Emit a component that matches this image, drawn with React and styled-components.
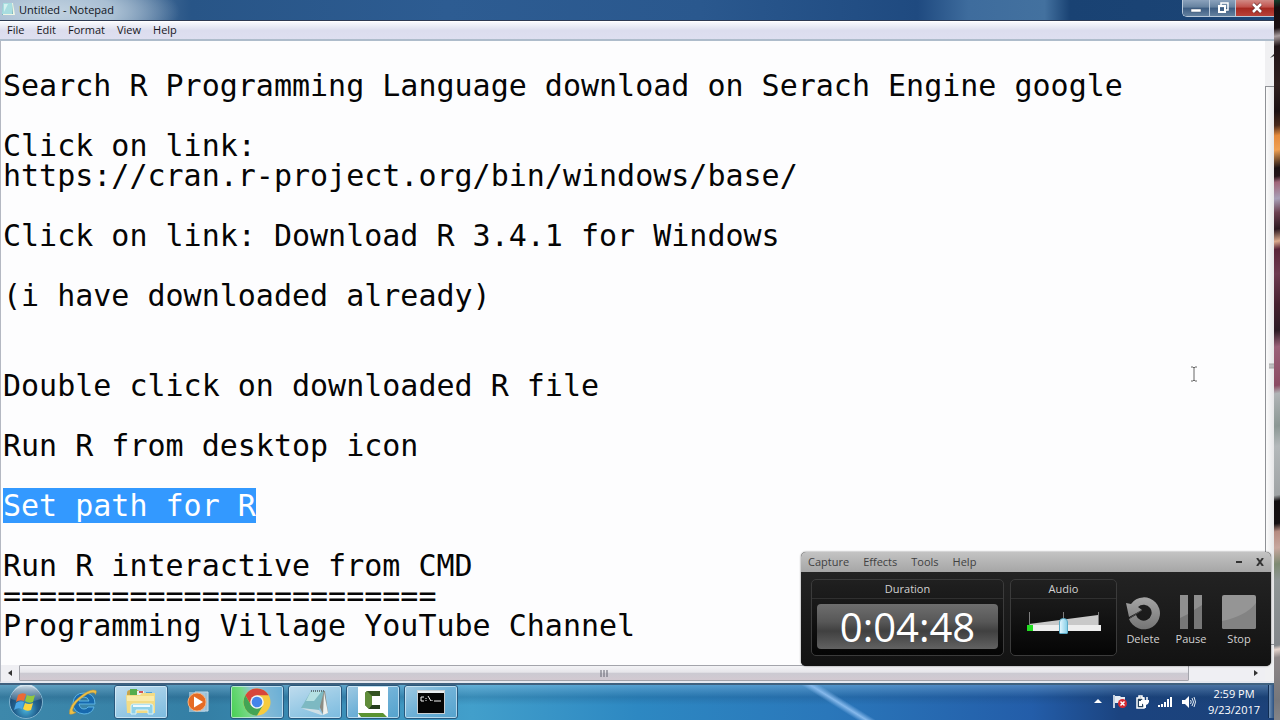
import React, { useLayoutEffect, useRef } from 'react'
import styled, { createGlobalStyle } from 'styled-components'

const GlobalStyle = createGlobalStyle`
  * {
    box-sizing: border-box;
  }

  body {
    margin: 0;
    overflow: hidden;
    font-family: 'Open Sans', 'Noto Sans', sans-serif;
    font-size: 11px;
  }

  button {
    font: inherit;
    color: inherit;
    padding: 0;
    margin: 0;
    border: 0;
    background: none;
  }
`

const Desktop = styled.div`
  position: relative;
  display: flex;
  height: 100vh;
`

const Screen = styled.div`
  flex: 1;
  min-width: 0;
  display: flex;
  flex-direction: column;
`

const Wallpaper = styled.div`
  width: 6px;
  background: linear-gradient(
    170deg,
    #14402c 0,
    #170d10 8px,
    #1c1114 28px,
    #a89c9e 36px,
    #211518 46px,
    #30201f 84px,
    #1a1012 110px,
    #4a2a1c 124px,
    #e58a3c 134px,
    #f0a052 148px,
    #1a1114 166px,
    #241419 174px,
    #a06478 180px,
    #a8a0b8 196px,
    #6b3f50 210px,
    #2b1820 226px,
    #dba98c 238px,
    #5a2438 246px,
    #6d3a50 270px,
    #46202f 300px,
    #2c1a24 326px,
    #9a6078 342px,
    #8b4a62 380px,
    #b0b4b6 388px,
    #8b9794 420px,
    #b3b8ba 440px,
    #9fa3a5 488px,
    #120e10 494px,
    #151012 516px,
    #b58a80 524px,
    #c7a79e 540px,
    #7d8a72 556px,
    #8f9696 572px,
    #83878b 636px,
    #e6d4cc 640px,
    #8d8687 648px,
    #77777b 690px,
    #8a8a8d 717px,
    #000 718px
  );
`

const Window = styled.section`
  flex: 1;
  min-height: 0;
  display: flex;
  flex-direction: column;
  background: #fdfdfe;
`

const TitleBar = styled.header`
  display: flex;
  justify-content: space-between;
  height: 21px;
  border-bottom: 1px solid #2d3a52;
  background:
    radial-gradient(ellipse 130px 40px at 50px 12px, #c3d3e1 0, #a9bfd3 50%, transparent 100%),
    linear-gradient(90deg, #7295b5 0, #55799f 10%, #285587 15%, #2d5c92 35%, #2a588e 55%, #1f4a80 72%, #3e6c9d 76%, #43719f 82%, #194273 84%, #1c4576 100%);
`

const Title = styled.h1`
  display: flex;
  align-items: center;
  gap: 4px;
  margin: 0;
  padding: 0 0 2px 2px;
  font-size: 11px;
  font-weight: 400;
  color: #10151c;
`

const Caption = styled.div`
  display: flex;
  height: 17px;
  border: 1px solid #b9c9da;
  border-top: 0;
  border-right: 0;
  border-radius: 0 0 0 5px;
  overflow: hidden;
`

const CaptionButton = styled.button`
  display: grid;
  place-items: center;
  width: ${(p) => (p.$close ? 39 : 26)}px;
  padding-left: ${(p) => (p.$close ? 4 : 0)}px;
  border-left: ${(p) => (p.$first ? 0 : '1px solid #b9c9da')};
  background: ${(p) =>
    p.$close
      ? 'linear-gradient(#d18a85 0, #c0504a 45%, #a52820 50%, #b8423a 100%)'
      : 'linear-gradient(#8ba2bc 0, #65819f 45%, #3c5c82 50%, #64819f 100%)'};
`

const MenuBar = styled.nav`
  display: flex;
  align-items: center;
  gap: 12px;
  height: 20px;
  padding: 0 7px 2px;
  border-top: 1px solid #fff;
  border-bottom: 2px solid #aebccb;
  background: linear-gradient(#f8f9fd 0, #e4e6f2 35%, #dcddee 50%, #dedff0 100%);
  color: #17171c;
`

const Content = styled.div`
  flex: 1;
  min-height: 0;
  display: flex;
`

const Editor = styled.textarea`
  flex: 1;
  min-width: 0;
  margin: 0;
  padding: 0 2px;
  border: 0;
  border-left: 1px solid #b4b8c2;
  outline: 0;
  resize: none;
  overflow: hidden;
  background: #fdfdfe;
  color: #050505;
  caret-color: transparent;
  font-family: 'DejaVu Sans Mono', monospace;
  font-size: 30px;
  line-height: 30px;
  white-space: pre;

  &::selection {
    background: #3399ff;
    color: #fff;
  }
`

const VerticalScroll = styled.div`
  width: 9px;
  display: flex;
  flex-direction: column;
  overflow: hidden;
  background: #f0f0f2;
`

const VerticalArrow = styled.div`
  height: 45px;
  padding: 6px 0 0 5px;
`

const VerticalThumb = styled.div`
  flex: 1;
  display: flex;
  align-items: center;
  padding: 0 0 0 3px;
  margin-bottom: 20px;
  border: 1px solid #8f9196;
  border-right: 0;
  background: linear-gradient(90deg, #fbfbfb, #e6e6e8);
`

const HorizontalScroll = styled.div`
  display: flex;
  height: 18px;
  border-left: 1px solid #b4b8c2;
  border-bottom: 2px solid #e6e9f0;
  background: #efeff3;
`

const ScrollArrow = styled.button`
  display: grid;
  place-items: center;
  width: 18px;
`

const HorizontalThumb = styled.div`
  flex: 1;
  display: grid;
  place-items: center;
  margin-right: 58px;
  border: 1px solid #a3a4ab;
  border-radius: 1px;
  background: linear-gradient(#f3f3f6 0, #e6e5ea 45%, #cbcad2 50%, #d2c9d1 100%);
`

const Taskbar = styled.footer`
  display: flex;
  gap: 4px;
  height: 37px;
  border-top: 2px solid #3f617f;
  background:
    linear-gradient(32deg, transparent 43%, #86b9ec 50%, transparent 57%) 67% 0 / 80px 37px no-repeat,
    linear-gradient(rgba(160, 205, 235, 0.35) 0, rgba(20, 60, 100, 0.2) 12px, transparent 20px),
    linear-gradient(90deg, #3d88ab 0, #347fa5 16%, #429fcb 37%, #2d88c2 50%, #2a77ba 65%, #235da9 81%, #1b437f 88%, #1c4279 100%);
`

const StartButton = styled.button`
  display: grid;
  place-items: center;
  width: 52px;
`

const TaskButton = styled.button`
  display: grid;
  place-items: center;
  width: 54px;
  margin-bottom: 1px;
  border: 1px solid ${(p) => (p.$open ? '#28587d' : 'transparent')};
  border-radius: 3px;
  box-shadow: ${(p) => (p.$open ? 'inset 0 0 0 1px rgba(225, 242, 252, 0.65)' : 'none')};
  background: ${(p) => {
    if (p.$tone === 'progress') return 'linear-gradient(75deg, #45cf50 0, #74d984 30%, #8ebfd6 46%, #68aed6 100%)'
    if (p.$tone === 'active') return 'linear-gradient(160deg, #bfdcee 0, #9bcbe6 50%, #7bbbdf 100%)'
    return p.$open ? 'linear-gradient(150deg, #a0cae3 0, #6fb1d7 50%, #54a2cd 100%)' : 'none'
  }};
`

const Tray = styled.div`
  flex: 1;
  display: flex;
  justify-content: flex-end;
  align-items: center;
  gap: 9px;
  padding-bottom: 2px;
  color: #fff;
`

const TrayButton = styled.button`
  display: grid;
  place-items: center;
`

const Clock = styled.time`
  width: 58px;
  text-align: center;
  line-height: 16px;
`

const ShowDesktop = styled.button`
  align-self: stretch;
  width: 6px;
  margin-left: -4px;
  border-left: 1px solid #0f2c52;
  background: linear-gradient(90deg, #7092b8, #2b5080);
`

/* floats over the notepad window */
const Recorder = styled.section`
  position: absolute;
  right: 9px;
  bottom: 54px;
  width: 470px;
  border-radius: 5px;
  overflow: hidden;
  background: #171717;
  box-shadow: 0 0 2px rgba(0, 0, 0, 0.6);
  color: #d2d2d2;
`

const RecorderMenu = styled.header`
  display: flex;
  align-items: center;
  gap: 14px;
  height: 20px;
  padding: 0 7px 2px;
  background: linear-gradient(#c3c3c3, #a6a6a6);
  color: #414141;
`

const Spacer = styled.div`
  flex: 1;
`

const RecorderBody = styled.div`
  display: flex;
  gap: 6px;
  padding: 7px 10px 10px;
  background: linear-gradient(#232323, #121212);
`

const Panel = styled.section`
  flex: none;
  width: ${(p) => p.$width}px;
  height: 77px;
  border: 1px solid #3b3b3b;
  border-radius: 5px;
  background: linear-gradient(#202020 0, #161616 40%, #050505 100%);
`

const PanelTitle = styled.label`
  display: block;
  height: 19px;
  line-height: 18px;
  text-align: center;
  border-bottom: 1px solid #303030;
`

const Counter = styled.output`
  display: block;
  height: 45px;
  margin: 5px;
  border-radius: 4px;
  background: linear-gradient(#6e6e6e 0, #575757 40%, #404040 60%, #626262 100%);
  color: #fff;
  font-size: 40px;
  line-height: 45px;
  text-align: center;
`

const Volume = styled.div`
  display: grid;
  justify-content: center;
  padding-top: 13px;

  > * {
    grid-area: 1 / 1;
  }
`

const VolumeSlider = styled.input`
  appearance: none;
  width: 76px;
  height: 22px;
  margin: 0;
  background: none;

  &::-webkit-slider-thumb {
    appearance: none;
    width: 9px;
    height: 16px;
    margin-top: 6px;
    border: 1px solid #5aa9c5;
    border-radius: 4px 4px 1px 1px;
    background: linear-gradient(90deg, #e0f6ff, #8ad0e8);
  }
`

const Actions = styled.div`
  display: flex;
  gap: 8px;
  padding-top: 15px;
`

const Action = styled.button`
  display: flex;
  flex-direction: column;
  align-items: center;
  width: 40px;
  line-height: 18px;
`

const notes = `
Search R Programming Language download on Serach Engine google

Click on link:
https://cran.r-project.org/bin/windows/base/

Click on link: Download R 3.4.1 for Windows

(i have downloaded already)


Double click on downloaded R file

Run R from desktop icon

Set path for R

Run R interactive from CMD
========================
Programming Village YouTube Channel
`

const selected = 'Set path for R'

const NotepadIcon = () => (
  <svg width="13" height="14" viewBox="0 0 13 14">
    <path d="M1 1h10l1 12H0z" fill="#78b6bd" />
    <path d="M1 1h9v11H0z" fill="#a8dde0" />
    <path d="M10 1h1l2 12H1v-1h10z" fill="#eef5e4" />
    <path d="M2 2h4L2 10z" fill="#d4f1f0" />
  </svg>
)

const StartOrb = () => (
  <svg width="36" height="35" viewBox="0 0 36 35">
    <defs>
      <radialGradient id="orb" cx="50%" cy="72%" r="62%">
        <stop offset="0" stopColor="#4bb6df" />
        <stop offset=".55" stopColor="#22618f" />
        <stop offset="1" stopColor="#1a4268" />
      </radialGradient>
      <linearGradient id="orbShine" x1="0" y1="0" x2="0" y2="1">
        <stop offset="0" stopColor="#e7f2f8" stopOpacity=".95" />
        <stop offset="1" stopColor="#a5c6da" stopOpacity=".15" />
      </linearGradient>
    </defs>
    <circle cx="18" cy="17" r="16.5" fill="url(#orb)" stroke="#7fb3cf" />
    <path d="M3 14A15 15 0 0 1 33 14Q18 20 3 14z" fill="url(#orbShine)" />
    <path d="M10 10q4-3 8-1l-2 7q-4-2-8 1z" fill="#ec6a35" />
    <path d="M19 10q4 2 8 0l-2 7q-4 2-8-1z" fill="#92c83e" />
    <path d="M8 18q4-3 8-1l-2 7q-4-2-8 1z" fill="#4ba6e4" />
    <path d="M17 18q4 2 8 0l-2 7q-4 2-8-1z" fill="#fbd43c" />
  </svg>
)

const ExplorerIcon = () => (
  <svg width="30" height="28" viewBox="0 0 30 28">
    <path
      d="M27 16H11q1 5 5 5 3 0 4-2h6q-2 7-10 7Q5 25 5 15 6 5 16 5q11 0 11 11zM11 13h10q-1-4-5-4t-5 4z"
      fill="#1769ae"
      fillRule="evenodd"
      stroke="#5db4e4"
    />
    <path d="M1.500 26Q1 17 11 9.500 22 0 28 2.500q1 1-.5 4-.5-3.500-8-.5Q6 14 4.500 22q0 2 3.500 2.500-4 2.500-6.500 1.500z" fill="#edc045" stroke="#c9952e" strokeWidth=".5" />
  </svg>
)

const FolderIcon = () => (
  <svg width="32" height="30" viewBox="0 0 32 30">
    <path d="M2 6q0-3 3-3h8l2 3h13q2 0 2 2v18H2z" fill="#c9a54a" />
    <path d="M5 2h7v6H5z" fill="#56ad4d" />
    <path d="M12 4h7v4h-7z" fill="#edf1ef" />
    <path d="M14 4h4v2h-4z" fill="#d35555" />
    <path d="M21 5h6v4h-6z" fill="#4c9edb" />
    <path d="M1 8h14l2-2h13v20H2z" fill="#f3dc85" />
    <path d="M2 9h27v5H2z" fill="#faebaa" />
    <path d="M6 19q0-2 2-2h18q2 0 2 2v8h-5v-4H11v4H6z" fill="#8fd1e9" stroke="#d9f3fb" />
    <path d="M8 19h17" stroke="#eefaff" strokeWidth="2" />
  </svg>
)

const PlayerIcon = () => (
  <svg width="26" height="24" viewBox="0 0 26 24">
    <path d="M9 2h13v19H9z" fill="#9cc0d6" stroke="#c4dce9" />
    <path d="M3 2h16v20H3z" fill="#a9cce1" opacity=".7" />
    <circle cx="11" cy="12" r="9" fill="#e56b24" stroke="#f7b07b" />
    <path d="M8 6.500l9 5.500-9 5.500z" fill="#fff" />
  </svg>
)

const ChromeIcon = () => (
  <svg width="28" height="28" viewBox="0 0 28 28">
    <circle cx="14" cy="14" r="13.500" fill="#f6cb3f" />
    <path d="M2.300 7.300A13.500 13.500 0 0 1 25.700 7.300H14L8.200 17.300z" fill="#d8453b" />
    <path d="M2.300 7.300A13.500 13.500 0 0 0 14 27.500L19.800 17.400H8.200z" fill="#42a455" />
    <circle cx="14" cy="14" r="6.800" fill="#f2f5f7" />
    <circle cx="14" cy="14" r="5.300" fill="#4584ea" />
  </svg>
)

const PadIcon = () => (
  <svg width="32" height="30" viewBox="0 0 32 30">
    <path d="M13 4h13l3 22-5 1z" fill="#8b8b83" />
    <path d="M25 5l4 21-5 2z" fill="#eef1ee" />
    <path d="M12 4h13l-5 19-18-2z" fill="#7db9c2" />
    <path d="M12 4h11l-8 10-8 0z" fill="#b5e0e2" />
    <path d="M2 21l18 2 4 5-2 0z" fill="#dfe6e6" opacity=".8" />
    <path d="M12 4h13" stroke="#60767c" strokeWidth="2" strokeDasharray="1 1" />
  </svg>
)

const CamtasiaIcon = () => (
  <svg width="30" height="30" viewBox="0 0 30 30">
    <path d="M0 0h30v30H0z" fill="#fff" />
    <path d="M0 26h25l4 4H3z" fill="#5b9332" />
    <path d="M9 4h13v5h-8v9h8v4H11l-4-4V6z" fill="#345322" />
    <path d="M9 4l5 5v9l-3 4-4-4V6z" fill="#618d3a" />
    <path d="M14 18h8v4H11z" fill="#263e1d" />
  </svg>
)

const ConsoleIcon = () => (
  <svg width="28" height="24" viewBox="0 0 28 24">
    <path d="M0 0h28v24H0z" fill="#c7ced2" />
    <path d="M1 3h26v20H1z" fill="#050505" />
    <path d="M1 1h26v2H1z" fill="#e8edf0" />
    <path d="M7 7H4v4h3M9 8v1M9 10v1M11 6l3 5M15 10v1M17 11h7" fill="none" stroke="#f3f3f3" />
  </svg>
)

const FlagIcon = () => (
  <svg width="14" height="15" viewBox="0 0 14 15">
    <path d="M1 1v13" stroke="#fff" strokeWidth="1.500" />
    <path d="M2 2h5l1 1h4v7H7L6 9H2z" fill="#e7edf3" />
    <circle cx="9.500" cy="9.500" r="4.500" fill="#d62a32" />
    <path d="M7.500 7.500l4 4m0-4l-4 4" stroke="#fff" strokeWidth="1.500" />
  </svg>
)

const PowerIcon = () => (
  <svg width="13" height="14" viewBox="0 0 13 14">
    <path d="M1 3h7v10H1zM3 1h3v2H3z" fill="#26435e" stroke="#fff" strokeWidth="1.500" />
    <path d="M3 6h3v5H3z" fill="#fff" />
    <path d="M7 2v4M11 2v4" stroke="#fff" strokeWidth="1.500" />
    <path d="M5 5h8v2q-1 3-3 3v3H8v-3Q6 9 5 7z" fill="#fff" />
  </svg>
)

const SignalIcon = () => (
  <svg width="14" height="12" viewBox="0 0 14 12">
    <path d="M0 9h2v2H0zM3 8h2v3H3zM6 6h2v5H6zM9 3h2v8H9zM12 1h2v10h-2z" fill="#fff" />
  </svg>
)

const SpeakerIcon = () => (
  <svg width="15" height="14" viewBox="0 0 15 14">
    <path d="M1 5h3l4-4v12L4 9H1z" fill="#fff" />
    <path d="M9.500 5q1.500 2 0 4M11 3q3 4 0 8M13 2q3 5 0 10" fill="none" stroke="#e3ebf3" />
  </svg>
)

const DeleteIcon = () => (
  <svg width="36" height="36" viewBox="0 0 36 36">
    <defs>
      <linearGradient id="metal" x1="0" y1="0" x2="0" y2="1">
        <stop offset="0" stopColor="#a5a5a5" />
        <stop offset="1" stopColor="#747474" />
      </linearGradient>
    </defs>
    <path d="M6 10A16 16 0 1 1 4 25L11 21A8 8 0 1 0 13 13L17 16 4 23 1 9z" fill="url(#metal)" />
    <path d="M17 16L5 24" stroke="#4c4c4c" />
  </svg>
)

const PauseIcon = () => (
  <svg width="24" height="36" viewBox="0 0 24 36">
    <path d="M1 1h8v34H1zM15 1h8v34h-8z" fill="#8f8f8f" />
    <path d="M1 24l8-4v15H1zM15 16l8-5v24h-8z" fill="#777" />
  </svg>
)

const StopIcon = () => (
  <svg width="36" height="36" viewBox="0 0 36 36">
    <rect x="1" y="1" width="34" height="34" rx="2" fill="#959595" />
    <path d="M1 27Q25 22 35 9v24q0 2-2 2H3q-2 0-2-2z" fill="#838383" />
  </svg>
)

const IBeam = styled.svg`
  position: absolute;
  top: 366px;
  right: 82px;
`

function NotepadWindow() {
  const editor = useRef(null)

  useLayoutEffect(() => {
    const start = notes.indexOf(selected)
    editor.current.focus({ preventScroll: true })
    editor.current.setSelectionRange(start, start + selected.length)
  }, [])

  return (
    <Window>
      <TitleBar>
        <Title>
          <NotepadIcon />
          Untitled - Notepad
        </Title>
        <Caption>
          <CaptionButton $first aria-label="Minimize">
            <svg width="12" height="12" viewBox="0 0 12 12">
              <path d="M1 7h10v3H1z" fill="#fff" stroke="#465a72" strokeWidth=".5" />
            </svg>
          </CaptionButton>
          <CaptionButton aria-label="Restore">
            <svg width="12" height="12" viewBox="0 0 12 12">
              <path d="M4 3V1h7v7H9" fill="none" stroke="#fff" strokeWidth="1.500" />
              <path d="M2 4h6v6H2z" fill="none" stroke="#fff" strokeWidth="2" />
            </svg>
          </CaptionButton>
          <CaptionButton $close aria-label="Close">
            <svg width="12" height="12" viewBox="0 0 12 12">
              <path d="M2 2l8 8M10 2l-8 8" stroke="#6b3030" strokeWidth="4" />
              <path d="M2 2l8 8M10 2l-8 8" stroke="#fff" strokeWidth="2.500" />
            </svg>
          </CaptionButton>
        </Caption>
      </TitleBar>
      <MenuBar>
        {['File', 'Edit', 'Format', 'View', 'Help'].map((item) => (
          <button key={item}>{item}</button>
        ))}
      </MenuBar>
      <Content>
        <Editor ref={editor} aria-label="Text editor" spellCheck={false} defaultValue={notes} />
        <VerticalScroll>
          <VerticalArrow>
            <svg width="8" height="5" viewBox="0 0 8 5">
              <path d="M0 4l4-4 4 4-4-2z" fill="#333" />
            </svg>
          </VerticalArrow>
          <VerticalThumb>
            <svg width="8" height="8" viewBox="0 0 8 8">
              <path d="M0 1h8M0 4h8M0 7h8" stroke="#555" />
            </svg>
          </VerticalThumb>
        </VerticalScroll>
      </Content>
      <HorizontalScroll>
        <ScrollArrow aria-label="Scroll left">
          <svg width="4" height="6" viewBox="0 0 4 6">
            <path d="M4 0v6L0 3z" fill="#333" />
          </svg>
        </ScrollArrow>
        <HorizontalThumb>
          <svg width="8" height="7" viewBox="0 0 8 7">
            <path d="M1 0v7M4 0v7M7 0v7" stroke="#62626e" />
          </svg>
        </HorizontalThumb>
        <ScrollArrow aria-label="Scroll right">
          <svg width="4" height="6" viewBox="0 0 4 6">
            <path d="M0 0v6l4-3z" fill="#333" />
          </svg>
        </ScrollArrow>
        <VerticalScroll />
      </HorizontalScroll>
    </Window>
  )
}

function RecorderWindow() {
  return (
    <Recorder>
      <RecorderMenu>
        {['Capture', 'Effects', 'Tools', 'Help'].map((item) => (
          <button key={item}>{item}</button>
        ))}
        <Spacer />
        <button aria-label="Minimize recorder">
          <svg width="6" height="8" viewBox="0 0 6 8">
            <path d="M0 4h6" stroke="#333" strokeWidth="2" />
          </svg>
        </button>
        <button aria-label="Close recorder">
          <svg width="8" height="8" viewBox="0 0 8 8">
            <path d="M1 0l6 8M7 0L1 8" stroke="#333" strokeWidth="2" />
          </svg>
        </button>
      </RecorderMenu>
      <RecorderBody>
        <Panel $width={193}>
          <PanelTitle htmlFor="duration">Duration</PanelTitle>
          <Counter id="duration">0:04:48</Counter>
        </Panel>
        <Panel $width={107}>
          <PanelTitle htmlFor="volume">Audio</PanelTitle>
          <Volume>
            <svg width="76" height="22" viewBox="0 0 76 22">
              <path d="M3 12L72 3v10H3z" fill="#c9c9c9" />
              <path d="M3.500 0v13M37.500 0v13M72.500 0v13" stroke="#7d7d7d" />
              <path d="M1 13h74v6H1z" fill="#eee" />
              <path d="M1 13h6v6H1z" fill="#22dd22" />
            </svg>
            <VolumeSlider id="volume" type="range" defaultValue="50" />
          </Volume>
        </Panel>
        <Actions>
          <Action>
            <DeleteIcon />
            Delete
          </Action>
          <Action>
            <PauseIcon />
            Pause
          </Action>
          <Action>
            <StopIcon />
            Stop
          </Action>
        </Actions>
      </RecorderBody>
    </Recorder>
  )
}

function App() {
  return (
    <>
      <GlobalStyle />
      <Desktop>
        <Screen>
          <NotepadWindow />
          <Taskbar>
            <StartButton aria-label="Start">
              <StartOrb />
            </StartButton>
            <TaskButton aria-label="Internet Explorer">
              <ExplorerIcon />
            </TaskButton>
            <TaskButton $open $tone="active" aria-label="Libraries">
              <FolderIcon />
            </TaskButton>
            <TaskButton aria-label="Media Player">
              <PlayerIcon />
            </TaskButton>
            <TaskButton $open $tone="progress" aria-label="Chrome">
              <ChromeIcon />
            </TaskButton>
            <TaskButton $open $tone="active" aria-label="Notepad">
              <PadIcon />
            </TaskButton>
            <TaskButton $open aria-label="Camtasia">
              <CamtasiaIcon />
            </TaskButton>
            <TaskButton $open aria-label="Command Prompt">
              <ConsoleIcon />
            </TaskButton>
            <Tray>
              <TrayButton aria-label="Show hidden icons">
                <svg width="10" height="5" viewBox="0 0 10 5">
                  <path d="M4 0l4 4H0z" fill="#fff" />
                </svg>
              </TrayButton>
              <TrayButton aria-label="Action Center">
                <FlagIcon />
              </TrayButton>
              <TrayButton aria-label="Power">
                <PowerIcon />
              </TrayButton>
              <TrayButton aria-label="Network">
                <SignalIcon />
              </TrayButton>
              <TrayButton aria-label="Volume">
                <SpeakerIcon />
              </TrayButton>
              <Clock>
                2:59 PM
                <br />
                9/23/2017
              </Clock>
              <ShowDesktop aria-label="Show desktop" />
            </Tray>
          </Taskbar>
        </Screen>
        <Wallpaper />
        <RecorderWindow />
        <IBeam width="8" height="16" viewBox="0 0 8 16">
          <path d="M1 1h2l1 1 1-1h2M4 2v12M1 15h2l1-1 1 1h2" fill="none" stroke="#666" />
        </IBeam>
      </Desktop>
    </>
  )
}

export default App
